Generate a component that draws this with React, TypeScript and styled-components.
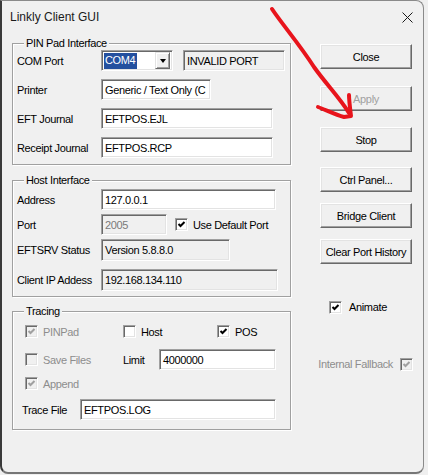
import React from "react";
import styled, { createGlobalStyle, css } from "styled-components";

const Global = createGlobalStyle`
  html, body { margin: 0; padding: 0; }
  body {
    width: 428px; height: 475px; overflow: hidden;
    background: #ececec;
    font-family: "Liberation Sans", Arial, sans-serif;
  }
`;

const Screen = styled.div`
  position: relative;
  width: 428px;
  height: 475px;
  display: flex;
  background: #efefef;
`;

const Window = styled.div`
  width: 424px;
  height: 474px;
  box-sizing: border-box;
  background: #f0f0f0;
  border: 1px solid #8a8a8a;
  border-left: 2px solid #3a3a3a;
  border-bottom: 2px solid #767676;
  border-radius: 0 8px 8px 8px;
  display: flex;
  flex-direction: column;
  font-size: 11px;
  letter-spacing: -0.35px;
  color: #000;
`;

const TitleBar = styled.div`
  height: 32px;
  display: flex;
  align-items: center;
  justify-content: space-between;
  padding: 0 10px 0 8px;
  flex-shrink: 0;
`;

const Title = styled.span`
  font-size: 12px;
  letter-spacing: 0;
  color: #1a1a1a;
  font-family: "Liberation Sans", Arial, sans-serif;
`;

const Body = styled.div`
  display: flex;
  flex: 1;
`;

const LeftCol = styled.div`
  display: flex;
  flex-direction: column;
  padding: 4px 0 0 10px;
  width: 279px;
`;

const Group = styled.fieldset<{ $h: number; $mt?: number }>`
  margin: ${(p) => p.$mt ?? 0}px 0 0 0;
  padding: 0 0 0 4px;
  min-width: 0;
  height: ${(p) => p.$h}px;
  box-sizing: border-box;
  border: 1px solid #a0a0a0;
  box-shadow: inset 1px 1px 0 #fff, 1px 1px 0 #fff;
  display: flex;
  flex-direction: column;
`;

const Legend = styled.legend`
  margin-left: 7px;
  padding: 0 2px;
  font-size: 11px;
  line-height: 13px;
  background: #f0f0f0;
  position: relative;
`;

const Row = styled.div<{ $mt?: number; $h?: number }>`
  display: flex;
  align-items: center;
  margin-top: ${(p) => p.$mt ?? 0}px;
  height: ${(p) => p.$h ?? 21}px;
  flex-shrink: 0;
`;

const Label = styled.span<{ $w?: number; $ml?: number; $disabled?: boolean }>`
  width: ${(p) => (p.$w ? `${p.$w}px` : "auto")};
  margin-left: ${(p) => p.$ml ?? 0}px;
  color: ${(p) => (p.$disabled ? "#8d8d8d" : "#000")};
  white-space: nowrap;
  flex-shrink: 0;
`;

const sunken = css`
  box-sizing: border-box;
  border: 1px solid;
  border-color: #a0a0a0 #fff #fff #a0a0a0;
  box-shadow: inset 1px 1px 0 #696969, inset -1px -1px 0 #e3e3e3;
`;

const Field = styled.div<{ $w: number; $ml?: number; $h?: number; $ro?: boolean; $disabled?: boolean }>`
  ${sunken};
  width: ${(p) => p.$w}px;
  height: ${(p) => p.$h ?? 21}px;
  margin-left: ${(p) => p.$ml ?? 0}px;
  background: ${(p) => (p.$ro || p.$disabled ? "#f0f0f0" : "#fff")};
  color: ${(p) => (p.$disabled ? "#7a7a7a" : "#000")};
  display: flex;
  align-items: center;
  padding-left: 3px;
  white-space: nowrap;
  overflow: hidden;
  flex-shrink: 0;
`;

const Combo = styled.div`
  ${sunken};
  width: 72px;
  height: 21px;
  background: #fff;
  display: flex;
  align-items: center;
  justify-content: space-between;
  padding: 0 2px 0 2px;
  flex-shrink: 0;
`;

const Selected = styled.span`
  background: #24509f;
  color: #fff;
  padding: 1px 2px 2px 1px;
  line-height: 13px;
`;

const DropBtn = styled.span`
  box-sizing: border-box;
  width: 15px;
  height: 17px;
  background: #f0f0f0;
  border: 1px solid;
  border-color: #e3e3e3 #696969 #696969 #e3e3e3;
  box-shadow: inset 1px 1px 0 #fff, inset -1px -1px 0 #a0a0a0;
  display: flex;
  align-items: center;
  justify-content: center;
`;

const Arrow = styled.span`
  width: 0;
  height: 0;
  border-left: 3.5px solid transparent;
  border-right: 3.5px solid transparent;
  border-top: 4px solid #000;
`;

const RightCol = styled.div`
  display: flex;
  flex-direction: column;
  margin-left: 29px;
  width: 92px;
`;

const Button = styled.div<{ $mt: number; $disabled?: boolean }>`
  box-sizing: border-box;
  margin-top: ${(p) => p.$mt}px;
  width: 92px;
  height: 25px;
  flex-shrink: 0;
  background: #f0f0f0;
  border: 1px solid;
  border-color: #fff #696969 #696969 #fff;
  box-shadow: inset -1px -1px 0 #a0a0a0, inset 1px 1px 0 #e3e3e3;
  display: flex;
  align-items: center;
  justify-content: center;
  color: ${(p) => (p.$disabled ? "#a0a0a0" : "#000")};
  white-space: nowrap;
`;

const CheckRow = styled.div<{ $mt: number; $right?: boolean; $ml?: number }>`
  display: flex;
  align-items: center;
  justify-content: ${(p) => (p.$right ? "flex-end" : "flex-start")};
  margin-top: ${(p) => p.$mt}px;
  margin-left: ${(p) => p.$ml ?? 0}px;
  margin-right: ${(p) => (p.$right ? -1 : 0)}px;
  height: 14px;
  gap: 7px;
  white-space: nowrap;
`;

const Item = styled.div<{ $ml?: number; $w?: number }>`
  display: flex;
  align-items: center;
  gap: 5px;
  margin-left: ${(p) => p.$ml ?? 0}px;
  width: ${(p) => (p.$w ? `${p.$w}px` : "auto")};
  flex-shrink: 0;
`;

const Box = styled.span<{ $disabled?: boolean }>`
  ${sunken};
  width: 13px;
  height: 13px;
  background: ${(p) => (p.$disabled ? "#f0f0f0" : "#fff")};
  display: inline-flex;
  align-items: center;
  justify-content: center;
  flex-shrink: 0;
`;

const Close = styled.svg`
  width: 11px;
  height: 11px;
`;

const Annotation = styled.svg`
  position: absolute;
  left: 0;
  top: 0;
  pointer-events: none;
`;

function Check({ checked, disabled }: { checked?: boolean; disabled?: boolean }) {
  return (
    <Box $disabled={disabled}>
      {checked && (
        <svg width="9" height="9" viewBox="0 0 9 9">
          <path d="M1.5 4 L3.5 6 L7.5 2" fill="none" stroke={disabled ? "#a0a0a0" : "#000"} strokeWidth="2" />
        </svg>
      )}
    </Box>
  );
}

export default function App() {
  return (
    <>
      <Global />
      <Screen>
        <Window>
          <TitleBar>
            <Title>Linkly Client GUI</Title>
            <Close viewBox="0 0 11 11">
              <path d="M0.5 0.5 L10.5 10.5 M10.5 0.5 L0.5 10.5" stroke="#1a1a1a" strokeWidth="1" />
            </Close>
          </TitleBar>
          <Body>
            <LeftCol>
              <Group $h={128}>
                <Legend>PIN Pad Interface</Legend>
                <Row>
                  <Label $w={84}>COM Port</Label>
                  <Combo>
                    <Selected>COM4</Selected>
                    <DropBtn>
                      <Arrow />
                    </DropBtn>
                  </Combo>
                  <Field $w={102} $ml={10} $ro>
                    INVALID PORT
                  </Field>
                </Row>
                <Row $mt={8}>
                  <Label $w={84}>Printer</Label>
                  <Field $w={110}>Generic / Text Only (C</Field>
                </Row>
                <Row $mt={8}>
                  <Label $w={84}>EFT Journal</Label>
                  <Field $w={172}>EFTPOS.EJL</Field>
                </Row>
                <Row $mt={8}>
                  <Label $w={84}>Receipt Journal</Label>
                  <Field $w={172}>EFTPOS.RCP</Field>
                </Row>
              </Group>

              <Group $h={123} $mt={9}>
                <Legend>Host Interface</Legend>
                <Row $mt={2}>
                  <Label $w={84}>Address</Label>
                  <Field $w={175}>127.0.0.1</Field>
                </Row>
                <Row $mt={4}>
                  <Label $w={84}>Port</Label>
                  <Field $w={66} $disabled>
                    2005
                  </Field>
                  <Item $ml={8}>
                    <Check checked />
                    <Label>Use Default Port</Label>
                  </Item>
                </Row>
                <Row $mt={4} $h={22}>
                  <Label $w={84}>EFTSRV Status</Label>
                  <Field $w={129} $h={22} $ro>
                    Version 5.8.8.0
                  </Field>
                </Row>
                <Row $mt={8} $h={22}>
                  <Label $w={84}>Client IP Addess</Label>
                  <Field $w={177} $h={22} $ro>
                    192.168.134.110
                  </Field>
                </Row>
              </Group>

              <Group $h={125} $mt={8}>
                <Legend>Tracing</Legend>
                <Row $mt={3}>
                  <Item $ml={8} $w={98}>
                    <Check checked disabled />
                    <Label $disabled>PINPad</Label>
                  </Item>
                  <Item $w={94}>
                    <Check />
                    <Label>Host</Label>
                  </Item>
                  <Item>
                    <Check checked />
                    <Label>POS</Label>
                  </Item>
                </Row>
                <Row $mt={7}>
                  <Item $ml={8} $w={98}>
                    <Check disabled />
                    <Label $disabled>Save Files</Label>
                  </Item>
                  <Label $w={36}>Limit</Label>
                  <Field $w={117}>4000000</Field>
                </Row>
                <Row $mt={3}>
                  <Item $ml={8}>
                    <Check checked disabled />
                    <Label $disabled>Append</Label>
                  </Item>
                </Row>
                <Row $mt={5}>
                  <Label $w={58} $ml={5}>
                    Trace File
                  </Label>
                  <Field $w={196}>EFTPOS.LOG</Field>
                </Row>
              </Group>
            </LeftCol>

            <RightCol>
              <Button $mt={11}>Close</Button>
              <Button $mt={17} $disabled>
                Apply
              </Button>
              <Button $mt={16}>Stop</Button>
              <Button $mt={15}>Ctrl Panel...</Button>
              <Button $mt={11}>Bridge Client</Button>
              <Button $mt={11}>Clear Port History</Button>
              <CheckRow $mt={36} $ml={9}>
                <Check checked />
                <Label>Animate</Label>
              </CheckRow>
              <CheckRow $mt={43} $right>
                <Label $disabled>Internal Fallback</Label>
                <Check checked disabled />
              </CheckRow>
            </RightCol>
          </Body>
        </Window>
        <Annotation width="428" height="475" viewBox="0 0 428 475">
          <path
            d="M272 9 C 282 24, 300 45, 314 67 C 326 84, 340 98, 349 113"
            fill="none"
            stroke="#e8141c"
            strokeWidth="4"
            strokeLinecap="round"
          />
          <path
            d="M318 107 C 326 110, 336 115, 344 117 L 351 116 C 350 108, 349 100, 349 95"
            fill="none"
            stroke="#e8141c"
            strokeWidth="4"
            strokeLinecap="round"
            strokeLinejoin="round"
          />
        </Annotation>
      </Screen>
    </>
  );
}
